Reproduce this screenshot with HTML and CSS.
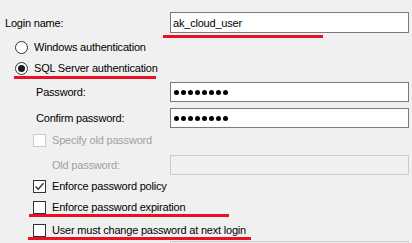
FILE: index.html
```html
<!DOCTYPE html>
<html>
<head>
<meta charset="utf-8">
<link rel="stylesheet" href="styles.css">
</head>
<body>
<div class="dialog">
  <div class="row row-login">
    <span class="lbl lbl-login">Login name:</span>
    <div class="field"><span class="val">ak_cloud_user</span></div>
  </div>
  <div class="row row-radio r1">
    <span class="radio"></span><span class="opt">Windows authentication</span>
  </div>
  <div class="row row-radio r2">
    <span class="radio checked"></span><span class="opt">SQL Server authentication</span>
  </div>
  <div class="row row-field r-pw">
    <span class="lbl lbl-sub">Password:</span>
    <div class="field"><span class="dots"><i></i><i></i><i></i><i></i><i></i><i></i><i></i><i></i></span></div>
  </div>
  <div class="row row-field r-cpw">
    <span class="lbl lbl-sub">Confirm password:</span>
    <div class="field"><span class="dots"><i></i><i></i><i></i><i></i><i></i><i></i><i></i><i></i></span></div>
  </div>
  <div class="row row-check r-spec">
    <span class="check disabled"></span><span class="opt dim">Specify old password</span>
  </div>
  <div class="row row-field r-old">
    <span class="lbl lbl-old dim">Old password:</span>
    <div class="field disabled"></div>
  </div>
  <div class="row row-check r-pol">
    <span class="check checked"><svg width="11" height="11" viewBox="0 0 11 11"><path d="M1.5 5.5 L4.2 8.3 L9.5 2.2" fill="none" stroke="#333" stroke-width="1.3"/></svg></span><span class="opt">Enforce password policy</span>
  </div>
  <div class="row row-check r-exp">
    <span class="check"></span><span class="opt">Enforce password expiration</span>
  </div>
  <div class="row row-check r-must">
    <span class="check"></span><span class="opt">User must change password at next login</span>
  </div>
  <div class="row row-field r-next">
    <span class="lbl"></span>
    <div class="field disabled"></div>
  </div>

  <span class="mark m1"></span>
  <span class="mark m2"></span>
  <span class="mark m3"></span>
  <span class="mark m4"></span>
</div>
</body>
</html>
```
FILE: styles.css
```css
html, body {
  margin: 0;
  padding: 0;
  background: #f0f0f0;
  overflow: hidden;
}
.dialog {
  position: relative;
  width: 412px;
  height: 243px;
  overflow: hidden;
  display: flex;
  flex-direction: column;
  font-family: "Liberation Sans", Arial, sans-serif;
  font-size: 11px;
  letter-spacing: -0.2px;
  color: #000;
}
.row {
  display: flex;
  align-items: center;
  flex: none;
}
.row-login {
  height: 21px;
  margin-top: 12px;
}
.lbl {
  flex: none;
  box-sizing: border-box;
  width: 170px;
}
.lbl-login { padding-left: 5px; }
.lbl-sub { padding-left: 36px; }
.lbl-old { padding-left: 52px; }
.field {
  box-sizing: border-box;
  width: 239px;
  height: 20px;
  border: 1px solid #7a7a7a;
  background: #fff;
  display: flex;
  align-items: center;
  padding-left: 2px;
}
.row-login .field { height: 21px; }
.field.disabled {
  border-color: #cccccc;
  background: #f0f0f0;
}
.val { padding-top: 1px; }
.dots {
  display: flex;
  gap: 2px;
  padding-left: 1px;
}
.dots i {
  display: block;
  width: 5px;
  height: 5px;
  border-radius: 50%;
  background: #000;
}
.row-radio {
  height: 14px;
  margin-top: 7px;
  padding-left: 15px;
}
.radio {
  box-sizing: border-box;
  width: 13px;
  height: 13px;
  border: 1px solid #333;
  border-radius: 50%;
  background: #fff;
  display: flex;
  align-items: center;
  justify-content: center;
  margin-right: 6px;
}
.radio.checked::after {
  content: "";
  width: 7px;
  height: 7px;
  border-radius: 50%;
  background: #1a1a1a;
}
.r-pw { height: 20px; margin-top: 7px; }
.r-cpw { height: 20px; margin-top: 6px; }
.row-check {
  height: 13px;
  padding-left: 33px;
}
.r-spec { margin-top: 6px; }
.r-old { height: 20px; margin-top: 8px; }
.r-pol { margin-top: 5px; }
.r-exp { margin-top: 8px; }
.r-must { margin-top: 10px; }
.r-next { height: 20px; margin-top: 4px; }
.check {
  box-sizing: border-box;
  width: 13px;
  height: 13px;
  border: 1px solid #333;
  background: #fff;
  margin-right: 6px;
  display: flex;
  align-items: center;
  justify-content: center;
}
.check.disabled {
  border-color: #cccccc;
  background: #fff;
}
.opt { white-space: nowrap; line-height: 13px; }
.dim { color: #a0a0a0; }
.mark {
  position: absolute;
  height: 3px;
  background: #e81224;
}
.m1 { left: 163px; top: 35px; width: 160px; }
.m2 { left: 14px; top: 76px; width: 142px; }
.m3 { left: 29px; top: 214px; width: 200px; }
.m4 { left: 28px; top: 237px; width: 223px; }
```
